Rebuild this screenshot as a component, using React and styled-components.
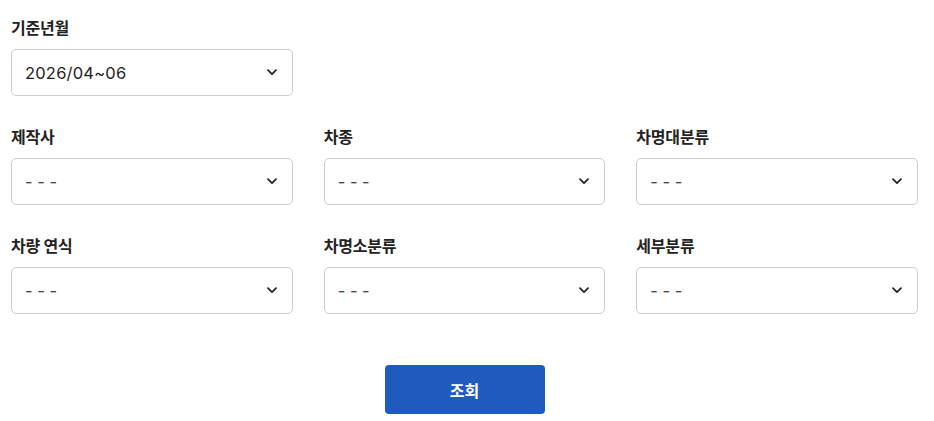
import React from "react";
import styled, { createGlobalStyle } from "styled-components";

const Global = createGlobalStyle`
  html, body { margin: 0; padding: 0; background: #fff; }
  body { font-family: "Noto Sans CJK KR", "Noto Sans", sans-serif; color: #222; }
  * { box-sizing: border-box; }
`;

const Page = styled.div`
  padding: 16px 16px 0 11px;
  width: 934px;
`;

const Form = styled.div`
  display: grid;
  grid-template-columns: repeat(3, 1fr);
  column-gap: 31px;
  row-gap: 29px;
`;

const Field = styled.div`
  display: flex;
  flex-direction: column;
  grid-column-start: ${(p) => (p.$newRow ? 1 : "auto")};
`;

const Label = styled.div`
  font-size: 16px;
  font-weight: 700;
  line-height: 22px;
  color: #222;
  margin-bottom: 11px;
  letter-spacing: -0.2px;
`;

const Select = styled.div`
  height: 47px;
  border: 1px solid #cccccc;
  border-radius: 5px;
  display: flex;
  align-items: center;
  justify-content: space-between;
  padding: 0 15px 0 13px;
  background: #fff;
`;

const Value = styled.span`
  font-size: 16.5px;
  color: ${(p) => (p.$placeholder ? "#444" : "#222")};
  letter-spacing: ${(p) => (p.$placeholder ? "0" : "0.2px")};
  font-family: Inter, "Noto Sans CJK KR", sans-serif;
`;

const Actions = styled.div`
  display: flex;
  justify-content: center;
  margin-top: 51px;
`;

const Button = styled.button`
  width: 160px;
  height: 49px;
  border: none;
  border-radius: 4px;
  background: #1f5bbf;
  color: #fff;
  font-family: "Noto Sans CJK KR", sans-serif;
  font-size: 16px;
  font-weight: 700;
`;

const Chevron = () => (
  <svg width="10" height="7" viewBox="0 0 10 7">
    <polyline points="1,1.2 5,5.2 9,1.2" fill="none" stroke="#222" strokeWidth="1.7" strokeLinecap="round" strokeLinejoin="round" />
  </svg>
);

const fields = [
  { label: "기준년월", value: "2026/04~06" },
  { label: "제작사", newRow: true },
  { label: "차종" },
  { label: "차명대분류" },
  { label: "차량 연식" },
  { label: "차명소분류" },
  { label: "세부분류" },
];

export default function App() {
  return (
    <>
      <Global />
      <Page>
        <Form>
          {fields.map((f) => (
            <Field key={f.label} $newRow={f.newRow}>
              <Label>{f.label}</Label>
              <Select>
                <Value $placeholder={!f.value}>{f.value || "- - -"}</Value>
                <Chevron />
              </Select>
            </Field>
          ))}
        </Form>
        <Actions>
          <Button>조회</Button>
        </Actions>
      </Page>
    </>
  );
}
